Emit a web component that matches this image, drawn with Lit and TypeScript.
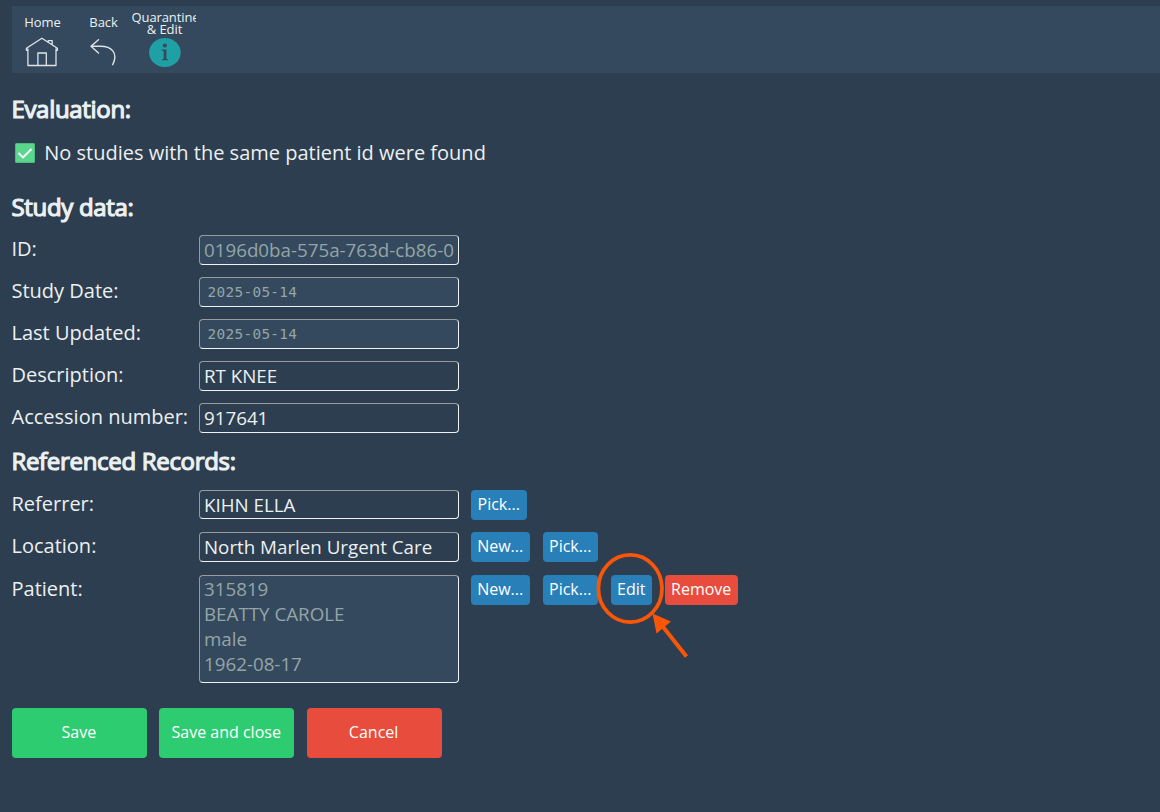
import { LitElement, html, css, nothing } from "lit";
import { customElement, property } from "lit/decorators.js";

@customElement("tool-item")
class ToolItem extends LitElement {
  @property() label = "";
  @property() second = "";
  static styles = css`
    :host { display: flex; flex-direction: column; align-items: center; width: 61px; height: 67px; }
    .label { height: 29px; width: 100%; display: flex; flex-direction: column; justify-content: center; align-items: center;
      font-size: 13px; line-height: 12px; letter-spacing: -0.1px; overflow: hidden; white-space: nowrap; padding-top: 2px; box-sizing: border-box; }
    .label.two { align-items: flex-start; padding-top: 4px; width: 64px; margin-left: -1px; }
    .two .sub { align-self: center; margin-left: 2px; }
  `;
  render() {
    return html`<div class="label ${this.second ? "two" : ""}"><span>${this.label}</span>
      ${this.second ? html`<span class="sub">${this.second}</span>` : nothing}</div><slot></slot>`;
  }
}

@customElement("app-root")
class AppRoot extends LitElement {
  static styles = css`
    :host { display: block; position: relative; box-sizing: border-box; width: 1160px; height: 812px; overflow: hidden;
      background: #2c3e50; color: #ecf0f1; font-family: "Open Sans", sans-serif; font-size: 20px; padding: 6px 0 0 12px; }
    .bar { display: flex; height: 67px; background: #34495e; }
    .bar svg { display: block; }
    .third { margin-left: -3px; width: 66px; }
    h2 { margin: 0 0 0 -0.6px; font-size: 24px; line-height: 36px; height: 36px; font-weight: 400; letter-spacing: -0.31px;
      -webkit-text-stroke: 1.2px #ecf0f1; white-space: nowrap; }
    .h-eval { margin-top: 18px; }
    .h-study { margin-top: 24px; }
    .h-ref { margin-top: 10px; }
    .result { display: flex; align-items: center; height: 26px; margin-top: 12px; padding-left: 3px; gap: 9.2px; }
    .result svg { display: block; margin-top: 1px; }
    .rows { display: grid; grid-template-columns: 175px auto; column-gap: 12px; row-gap: 12px; justify-content: start; }
    .study { margin-top: 10px; }
    .refs { margin-top: 11px; row-gap: 12.4px; }
    .name { line-height: 28px; height: 28px; white-space: nowrap; margin-left: -0.5px; }
    .field { box-sizing: border-box; width: 260px; height: 30px; border: 1px solid; border-color: #999a9a #f0f2f3 #f0f2f3 #999a9a;
      border-radius: 4px; padding: 0 4px; line-height: 28px; white-space: nowrap; overflow: hidden; font-size: 18.75px; }
    .off { background: #34495e; color: #95a5a6; }
    .date { font-family: "DejaVu Sans Mono", monospace; font-size: 14.4px; letter-spacing: 0.3px; padding-left: 7.6px; }
    .low { height: 29px; }
    .area { height: 108px; line-height: 25px; white-space: pre; padding-top: 0.1px; }
    .cell { display: flex; gap: 12px; align-items: flex-start; }
    .btns { display: flex; gap: 13px; }
    .btn { box-sizing: border-box; height: 30px; border-radius: 4px; background: #2980b9; color: #fff; font-size: 16px;
      line-height: 29px; text-align: center; white-space: nowrap; padding-right: 0.6px; }
    .new { width: 59px; } .pick { width: 55px; } .edit { width: 41px; } .remove { width: 73px; background: #e74c3c; }
    .wide { width: 56px; }
    .actions { display: flex; margin-top: 25px; gap: 12.4px; }
    .actions .btn { width: 135px; height: 50px; line-height: 49px; padding-right: 1.4px; }
    .actions .ok { background: #2ecc71; }
    .actions .stop { background: #e74c3c; }
    .mark { position: absolute; left: 590px; top: 545px; pointer-events: none; }
  `;

  field(label: string, value: string, kind = "") {
    return html`<div class="name">${label}</div><div class="field ${kind}">${value}</div>`;
  }

  record(label: string, value: string, kind: string, buttons: [string, string][]) {
    return html`<div class="name">${label}</div>
      <div class="cell"><div class="field ${kind}">${value}</div>
      <div class="btns">${buttons.map(([t, c]) => html`<div class="btn ${c}">${t}</div>`)}</div></div>`;
  }

  render() {
    return html`
      <div class="bar">
        <tool-item label="Home"><svg width="36" height="34" viewBox="0 0 36 34" fill="none" stroke="#dfe4e8" stroke-width="1.3" stroke-linejoin="round" stroke-linecap="round">
          <path d="M2.9 14V30.5H31V14M1.4 15.3V13.2L16.9 3.2L32.4 13.2V15.3H31M1.4 15.3H2.9M23.2 7V5.7H27.2V9.5M12.9 30.5V18H21.3V30.5"/></svg></tool-item>
        <tool-item label="Back"><svg width="36" height="34" viewBox="0 0 36 34" fill="none" stroke="#dfe4e8" stroke-width="1.4" stroke-linecap="round" stroke-linejoin="round">
          <path d="M12.5 4.8L5 11.2L12.5 18M5 11.2H14.5C25 11.2 32.8 17.5 26.7 29.7"/></svg></tool-item>
        <tool-item class="third" label="Quarantine" second="&amp; Edit"><svg width="36" height="34" viewBox="0 0 36 34">
          <ellipse cx="18.9" cy="17.5" rx="15.8" ry="14.6" fill="#1fa0a5"/>
          <circle cx="18.9" cy="10.5" r="2.1" fill="#34495e"/><path d="M15.8 14.5H20.4V24.2H22V25.3H16V24.2H17.7V15.8H15.8Z" fill="#34495e"/></svg></tool-item>
      </div>
      <h2 class="h-eval">Evaluation:</h2>
      <div class="result"><svg width="20" height="20" viewBox="0 0 20 20"><rect width="20" height="20" rx="1.5" fill="#4bbc7c"/>
        <rect x="1" y="1" width="18" height="18" rx="1" fill="#5ad68d"/><path d="M3.5 10L8 14.5L16.5 6" fill="none" stroke="#fff" stroke-width="1.9"/></svg>
        <span>No studies with the same patient id were found</span></div>
      <h2 class="h-study">Study data:</h2>
      <div class="rows study">
        ${this.field("ID:", "0196d0ba-575a-763d-cb86-0", "off")}
        ${this.field("Study Date:", "2025-05-14", "off date")}
        ${this.field("Last Updated:", "2025-05-14", "off date")}
        ${this.field("Description:", "RT KNEE")}
        ${this.field("Accession number:", "917641")}
      </div>
      <h2 class="h-ref">Referenced Records:</h2>
      <div class="rows refs">
        ${this.record("Referrer:", "KIHN ELLA", "low", [["Pick...", "wide"]])}
        ${this.record("Location:", "North Marlen Urgent Care", "", [["New...", "new"], ["Pick...", "pick"]])}
        ${this.record("Patient:", "315819\nBEATTY CAROLE\nmale\n1962-08-17", "off area",
          [["New...", "new"], ["Pick...", "pick"], ["Edit", "edit"], ["Remove", "remove"]])}
      </div>
      <div class="actions"><div class="btn ok">Save</div><div class="btn ok">Save and close</div><div class="btn stop">Cancel</div></div>
      <svg class="mark" width="110" height="120" viewBox="590 545 110 120" fill="none" stroke="#fb5607">
        <ellipse cx="630.2" cy="588.5" rx="31.8" ry="33.6" stroke-width="3.8"/>
        <path d="M686.5 656.5L660 623" stroke-width="4"/>
        <path d="M652.5 613.5L671 621.5L656.5 633.5Z" fill="#fb5607" stroke="none"/>
      </svg>`;
  }
}
